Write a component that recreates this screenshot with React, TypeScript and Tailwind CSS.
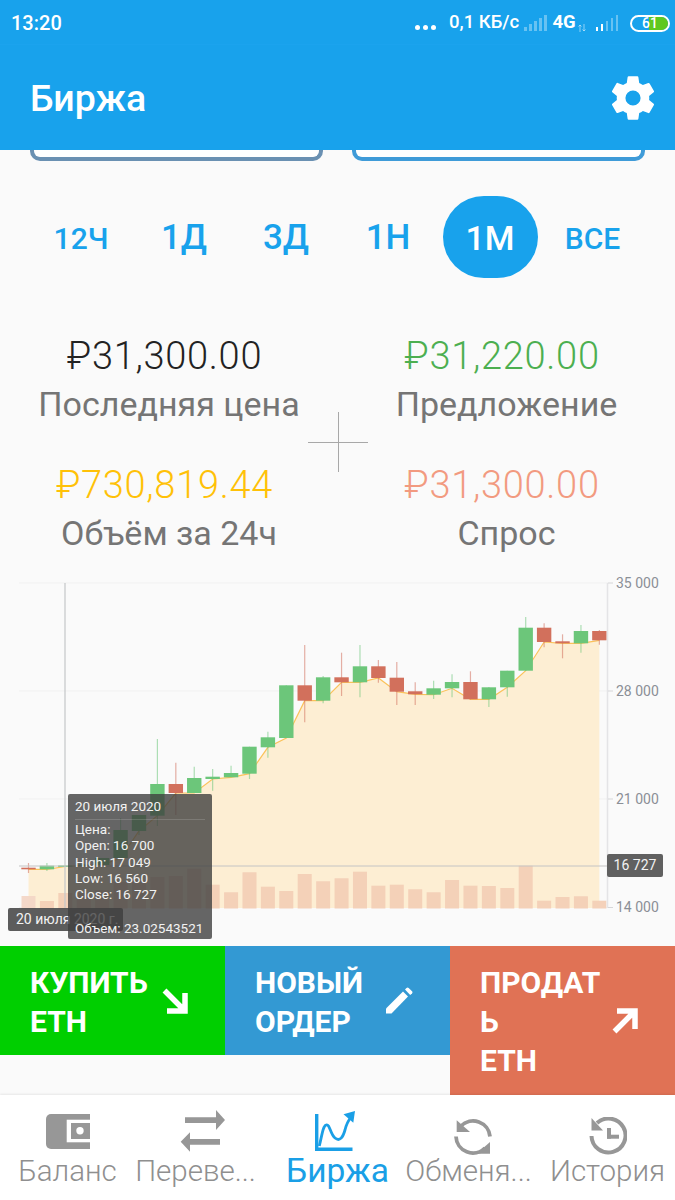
const roboto = "font-['Roboto',sans-serif]";

type Candle = [number, number, number, number, boolean];

// wick top, wick bottom, body top, body bottom, is green
const candles: Candle[] = [
  [863, 873, 867.7, 869.3, false],
  [863, 871, 865.7, 869.3, true],
  [865, 867, 865.5, 866.5, true],
  [864, 866, 864.5, 865.7, true],
  [858, 866, 858, 865, true],
  [818, 858, 830, 858, true],
  [815, 835, 815, 831, true],
  [739, 826, 784, 815.7, true],
  [762.7, 815, 784, 793, false],
  [766.7, 793, 778, 793, true],
  [769, 790.7, 776.7, 779, true],
  [765.7, 777, 773, 777.3, true],
  [746.7, 779, 746.7, 773.7, true],
  [731.7, 757.7, 737.3, 747.3, true],
  [685.3, 738, 685.3, 738, true],
  [645, 722.3, 685.3, 700.7, false],
  [676, 703.3, 677.3, 700.7, true],
  [652.7, 696, 677.3, 682.3, false],
  [645, 697.3, 666.3, 682.3, true],
  [660, 682.7, 666.3, 678, false],
  [662, 705, 677.7, 691.7, false],
  [682.3, 705, 691.3, 694.3, false],
  [680.7, 699, 688.3, 694.7, true],
  [674.3, 697.3, 682, 688.3, true],
  [671.3, 699.3, 682, 699.3, false],
  [687, 707, 687.3, 699.3, true],
  [670.7, 696.7, 670.7, 687.3, true],
  [617, 670.7, 627.7, 670.7, true],
  [623.3, 647.3, 627.7, 642, false],
  [634.3, 658.3, 641.3, 643.3, false],
  [625, 652.7, 631, 643.3, true],
  [630, 644.7, 631, 640.3, false],
];

const volumes = [
  896, 901, 893, 893, 890, 882, 880, 877, 876, 868.7, 884.7, 892.3, 872.3, 886.7, 891, 874, 881.3,
  878.3, 871.7, 885.7, 884.7, 889.3, 892.3, 880, 885.7, 886, 888, 865.7, 900.7, 897, 896.3, 900.7,
];

const cx = (i: number) => 28.5 + i * 18.415;
// the line follows the lower edge of every body
const linePoints = candles.map((c, i) => `${cx(i)},${c[3]}`).join(" ");
const areaPoints = `28.5,908 ${linePoints} ${cx(31)},908`;

function Chart() {
  return (
    <div className="relative h-[362px] mt-[19px]">
      <svg className="block" width="675" height="362" viewBox="0 578 675 362">
        {[583, 691, 799, 907.5].map((y) => (
          <line key={y} x1="19" x2="608" y1={y} y2={y} stroke="#f1f1f1" />
        ))}
        <polygon points={areaPoints} fill="#fdeed3" />
        {volumes.map((y, i) => (
          <rect key={i} x={cx(i) - 7} y={y} width="14" height={908.5 - y} fill={i === 0 ? "#f3d6c6" : "#f3cfb6"} opacity="0.95" />
        ))}
        <polyline points={linePoints} fill="none" stroke="#fbc25a" strokeWidth="1.2" />
        {candles.map((c, i) => {
          const color = c[4] ? "#6cc67a" : "#d2705c";
          return (
            <g key={i}>
              <line x1={cx(i)} x2={cx(i)} y1={c[0]} y2={c[1]} stroke={color} strokeOpacity="0.55" strokeWidth="1.2" />
              <rect x={cx(i) - 7.2} y={c[2]} width="14.4" height={Math.max(c[3] - c[2], 1.5)} fill={color} />
            </g>
          );
        })}
        <line x1="607.5" x2="607.5" y1="583" y2="908" stroke="#e4e4e6" strokeWidth="1.5" />
        {[583, 691, 799, 907.5].map((y) => (
          <line key={y} x1="608" x2="613" y1={y} y2={y} stroke="#d6d6d8" />
        ))}
        <line x1="19" x2="608" y1="866" y2="866" stroke="#c4c4c4" />
        <line x1="65" x2="65" y1="583" y2="908" stroke="#c4c6c8" strokeWidth="1.2" />
      </svg>

      {[
        ["35 000", "top-[-4px]"],
        ["28 000", "top-[104px]"],
        ["21 000", "top-[212px]"],
        ["14 000", "top-[320px]"],
      ].map(([label, top]) => (
        <span key={label} className={`absolute left-[616px] ${top} text-[14px] leading-[18px] text-[#8b8f96]`}>
          {label}
        </span>
      ))}
      <span className="absolute left-[607px] top-[276px] w-[56px] h-[23px] rounded-[2px] bg-[#606060] text-[14px] leading-[23px] text-center text-[#f2f2f2]">
        16 727
      </span>

      <div className="absolute left-[8px] top-[330px] w-[115px] h-[23px] rounded-[2px] bg-[#404040]/85 pl-[8px] text-[14px] leading-[23px] text-[#f2f2f2] whitespace-nowrap">
        20 июля 2020 г.
      </div>

      <div className="absolute left-[68px] top-[216px] w-[144px] h-[145px] rounded-[2px] bg-[#404040]/80 px-[7px] pt-[1px] text-[13.5px] text-[#f2f2f2]">
        <div className="leading-[22px] pb-[2px] border-b border-[#ffffff]/15 mb-[1px]">20 июля 2020</div>
        <div className="leading-[16.3px]">Цена:</div>
        <div className="leading-[16.3px]">Open: 16 700</div>
        <div className="leading-[16.3px]">High: 17 049</div>
        <div className="leading-[16.3px]">Low: 16 560</div>
        <div className="leading-[16.3px]">Close: 16 727</div>
        <div className="leading-[16.3px] mt-[18px] whitespace-nowrap">Объем: 23.02543521</div>
      </div>
    </div>
  );
}

function Stat({ value, label, color }: { value: string; label: string; color: string }) {
  return (
    <div className="flex flex-col items-center">
      <span className={`text-[38px] leading-[46px] font-light tracking-[0.7px] pr-[9px] ${color}`}>{value}</span>
      <span className="text-[34px] leading-[51px] text-[#757575] whitespace-nowrap">{label}</span>
    </div>
  );
}

function ArrowDownRight() {
  return (
    <svg width="26" height="26" viewBox="0 0 26 26" fill="none" stroke="#fff" strokeWidth="5.5">
      <path d="M2.5 2.5 L22 22 M23 5 V23 H5" />
    </svg>
  );
}

function ArrowUpRight() {
  return (
    <svg width="26" height="27" viewBox="0 0 26 27" fill="none" stroke="#fff" strokeWidth="5.5">
      <path d="M2.5 24.5 L22 5 M5 4 H23 V22" />
    </svg>
  );
}

function Pencil() {
  return (
    <svg width="27" height="27" viewBox="0 0 27 27" fill="#fff">
      <path d="M0 21.5 L17 4.5 L22 9.5 L5.5 26.5 H0 z" />
      <path d="M19 2.5 L20.5 1 a1.6 1.6 0 0 1 2.2 0 L26 4.2 a1.6 1.6 0 0 1 0 2.2 L24.2 8 z" />
    </svg>
  );
}

function Gear() {
  return (
    <svg width="52" height="52" viewBox="0 0 24 24" fill="#fff">
      <path d="M19.43 12.98c.04-.32.07-.64.07-.98s-.03-.66-.07-.98l2.11-1.65c.19-.15.24-.42.12-.64l-2-3.46c-.12-.22-.39-.3-.61-.22l-2.49 1c-.52-.4-1.08-.73-1.69-.98l-.38-2.65A.49.49 0 0 0 14 2h-4c-.25 0-.46.18-.49.42l-.38 2.65c-.61.25-1.17.59-1.69.98l-2.49-1c-.23-.09-.49 0-.61.22l-2 3.46c-.13.22-.07.49.12.64l2.11 1.65c-.04.32-.07.65-.07.98s.03.66.07.98l-2.11 1.65c-.19.15-.24.42-.12.64l2 3.46c.12.22.39.3.61.22l2.49-1c.52.4 1.08.73 1.69.98l.38 2.65c.03.24.24.42.49.42h4c.25 0 .46-.18.49-.42l.38-2.65c.61-.25 1.17-.59 1.69-.98l2.49 1c.23.09.49 0 .61-.22l2-3.46c.12-.22.07-.49-.12-.64l-2.11-1.65zM12 15.5a3.5 3.5 0 1 1 0-7 3.5 3.5 0 0 1 0 7z" />
    </svg>
  );
}

function Signal({ level }: { level: number }) {
  const bars = [4, 7, 10, 13, 16];
  return (
    <div className="flex items-end gap-[2.5px] h-[16px]">
      {bars.map((h, i) => (
        <div
          key={i}
          className={i < level ? "w-[2.5px] bg-white" : "w-[2.5px] bg-white/35"}
          style={{ height: h }}
        />
      ))}
    </div>
  );
}

function DataArrows() {
  return (
    <svg className="mt-[9px] ml-[1px] mr-[10px]" width="8" height="8" viewBox="0 0 8 8" fill="none" stroke="#fff" strokeOpacity="0.5">
      <path d="M2 8 V1 M0.5 2.5 L2 1 L3.5 2.5 M6 0 V7 M4.5 5.5 L6 7 L7.5 5.5" />
    </svg>
  );
}

function StatusBar() {
  return (
    <div className="h-[45px] flex items-center pl-[11px] pt-[2px] text-white font-medium border-b border-[#1ba3ee]">
      <span className="text-[20px] w-[404px]">13:20</span>
      <div className="flex gap-[3px] mt-[9px] w-[34px]">
        <div className="w-[5px] h-[5px] rounded-full bg-white" />
        <div className="w-[5px] h-[5px] rounded-full bg-white" />
        <div className="w-[5px] h-[5px] rounded-full bg-white" />
      </div>
      <span className="text-[18.5px] w-[75px] whitespace-nowrap">0,1 КБ/с</span>
      <Signal level={0} />
      <span className="text-[18.5px] font-bold ml-[6px] w-[24px]">4G</span>
      <DataArrows />
      <Signal level={2} />
      <div className="relative ml-[12px] w-[40px] h-[17px] rounded-[9px] border-2 border-white overflow-hidden">
        <div className="absolute right-0 top-0 bottom-0 w-[19px] bg-[#5fc820]" />
        <span className="absolute inset-0 text-center text-[14px] leading-[13px]">61</span>
      </div>
    </div>
  );
}

const nav = [
  { label: "Баланс", labelClass: "text-[29.5px] font-light text-[#8f8f8f]" },
  { label: "Переве...", labelClass: "text-[29.5px] font-light text-[#8f8f8f] pr-[14px]" },
  { label: "Биржа", labelClass: "text-[33.5px] text-[#1a9fe6]" },
  { label: "Обменя...", labelClass: "text-[29.5px] font-light text-[#8f8f8f] pr-[8px]" },
  { label: "История", labelClass: "text-[29.5px] font-light text-[#8f8f8f]" },
];

function NavIcon({ index }: { index: number }) {
  if (index === 0)
    return (
      <svg width="44" height="35" viewBox="0 0 44 35">
        <path d="M5 0 H44 V35 H5 a5 5 0 0 1 -5 -5 V5 a5 5 0 0 1 5 -5 z" fill="#979797" />
        <rect x="20.7" y="5.7" width="23.3" height="22.6" fill="#fff" />
        <rect x="25" y="9" width="19" height="16" fill="#979797" />
        <circle cx="34" cy="16.7" r="3.7" fill="#fff" />
      </svg>
    );
  if (index === 1)
    return (
      <svg width="45" height="42" viewBox="0 0 45 42" fill="#979797">
        <path d="M5 7.3 H36 V0 L45 10 L36 20 V13 H5 z" />
        <path d="M40 29 H10 V22.3 L0.7 31.7 L10 41.7 V34.7 H40 z" />
      </svg>
    );
  if (index === 2)
    return (
      <svg className="mr-[5px]" width="40" height="40" viewBox="0 0 40 40" fill="none" stroke="#1a9fe6">
        <path d="M1.7 3 V38.3 H37.5" strokeWidth="3.4" />
        <path d="M4.3 35 C7 24 8 15 11 14 C15 12.5 15 23 20 27 C25 31 28 26 30 19 C31 15 33 10 35.7 6.7" strokeWidth="2.8" />
        <path d="M40 0 L28.5 3.3 L38.3 11.7 z" fill="#1a9fe6" stroke="none" />
      </svg>
    );
  if (index === 3)
    return (
      <svg className="mt-[9px]" width="38" height="38" viewBox="0 0 38 38" fill="none" stroke="#979797" strokeWidth="3.8">
        <path d="M7 9 A17 17 0 0 1 36 19.5" />
        <path d="M2 19.5 A17 17 0 0 0 31 31" />
        <path d="M2.7 3.3 V15 H16 z" fill="#979797" stroke="none" />
        <path d="M36 25 V36.7 H22.7 z" fill="#979797" stroke="none" />
      </svg>
    );
  return (
    <svg className="mt-[9px]" width="38" height="38" viewBox="0 0 38 38" fill="none" stroke="#979797" strokeWidth="4">
      <path d="M2.5 19 A17 17 0 1 0 8 6" />
      <path d="M2.5 1 V13.5 H14 z" fill="#979797" stroke="none" />
      <rect x="18" y="11" width="4" height="10.7" fill="#979797" stroke="none" />
      <rect x="18" y="17.7" width="12" height="4" fill="#979797" stroke="none" />
    </svg>
  );
}

export default function App() {
  return (
    <div className={`${roboto} w-[675px] h-[1200px] bg-[#fafafa] overflow-hidden flex flex-col`}>
      <div className="bg-[#18a2ec]">
        <StatusBar />
        <div className="h-[105px] pl-[30px] pr-[16px] flex items-center justify-between">
          <span className="text-[37.5px] font-medium text-white pt-[2px]">Биржа</span>
          <Gear />
        </div>
      </div>

      <div className="flex justify-between px-[30px] h-[11px]">
        <div className="w-[293px] h-[11px] border-[4px] border-t-0 border-[#6a90b2] rounded-b-[10px] bg-white" />
        <div className="w-[293px] h-[11px] border-[4px] border-t-0 border-[#3f9bd8] rounded-b-[10px] bg-white" />
      </div>

      <div className="mt-[35px] h-[82px] grid grid-cols-[104px_102px_102px_102px_102px_103px] pl-[29px] items-center text-[#18a2ec] font-medium">
        <span className="text-[30px] text-center pt-[3px]">12Ч</span>
        <span className="text-[35px] text-center pt-[3px]">1Д</span>
        <span className="text-[35px] text-center pt-[3px]">3Д</span>
        <span className="text-[35px] text-center pt-[3px]">1Н</span>
        <span className="justify-self-center w-[95px] h-[82px] rounded-full bg-[#18a2ec] text-white text-[34px] flex items-center justify-center pt-[3px]">1М</span>
        <span className="text-[30px] text-center pt-[3px]">ВСЕ</span>
      </div>

      <div className="relative mt-[55px] grid grid-cols-[338px_337px] gap-y-[32px]">
        <Stat value="₽31,300.00" label="Последняя цена" color="text-[#222222]" />
        <Stat value="₽31,220.00" label="Предложение" color="text-[#4caf50]" />
        <Stat value="₽730,819.44" label="Объём за 24ч" color="text-[#ffc107]" />
        <Stat value="₽31,300.00" label="Спрос" color="text-[#f29a80]" />
        <div className="absolute left-[308px] top-[79px] w-[60px] h-[60px]">
          <div className="absolute left-0 right-0 top-[30px] h-px bg-[#a8a8a8]" />
          <div className="absolute top-0 bottom-0 left-[30px] w-px bg-[#a8a8a8]" />
        </div>
      </div>

      <Chart />

      <div className="relative z-10 flex items-start mt-[6px] h-[149px] text-white text-[30px] font-bold leading-[39px]">
        <div className="w-[225px] h-[109px] bg-[#00cf00] flex items-center pl-[30px]">
          <span className="w-[132px] mt-[2px]">КУПИТЬ<br />ETH</span>
          <ArrowDownRight />
        </div>
        <div className="w-[225px] h-[109px] bg-[#3399d3] flex items-center pl-[30px]">
          <span className="w-[131px] mt-[2px]">НОВЫЙ<br />ОРДЕР</span>
          <Pencil />
        </div>
        <div className="w-[225px] h-[149px] bg-[#e07255] flex items-center pl-[30px]">
          <span className="w-[132px] mt-[2px]">ПРОДАТ<br />Ь<br />ETH</span>
          <ArrowUpRight />
        </div>
      </div>

      <div className="bg-white h-[105px] flex shadow-[0_-1px_2px_rgba(0,0,0,0.08)] relative z-20">
        {nav.map((item, i) => (
          <div key={item.label} className="flex-1 min-w-0 flex flex-col items-center pt-[13px]">
            <div className="h-[46px] flex items-center justify-center">
              <NavIcon index={i} />
            </div>
            <span className={`${item.labelClass} leading-[38px] -mt-[2px] whitespace-nowrap`}>
              {item.label}
            </span>
          </div>
        ))}
      </div>
    </div>
  );
}
